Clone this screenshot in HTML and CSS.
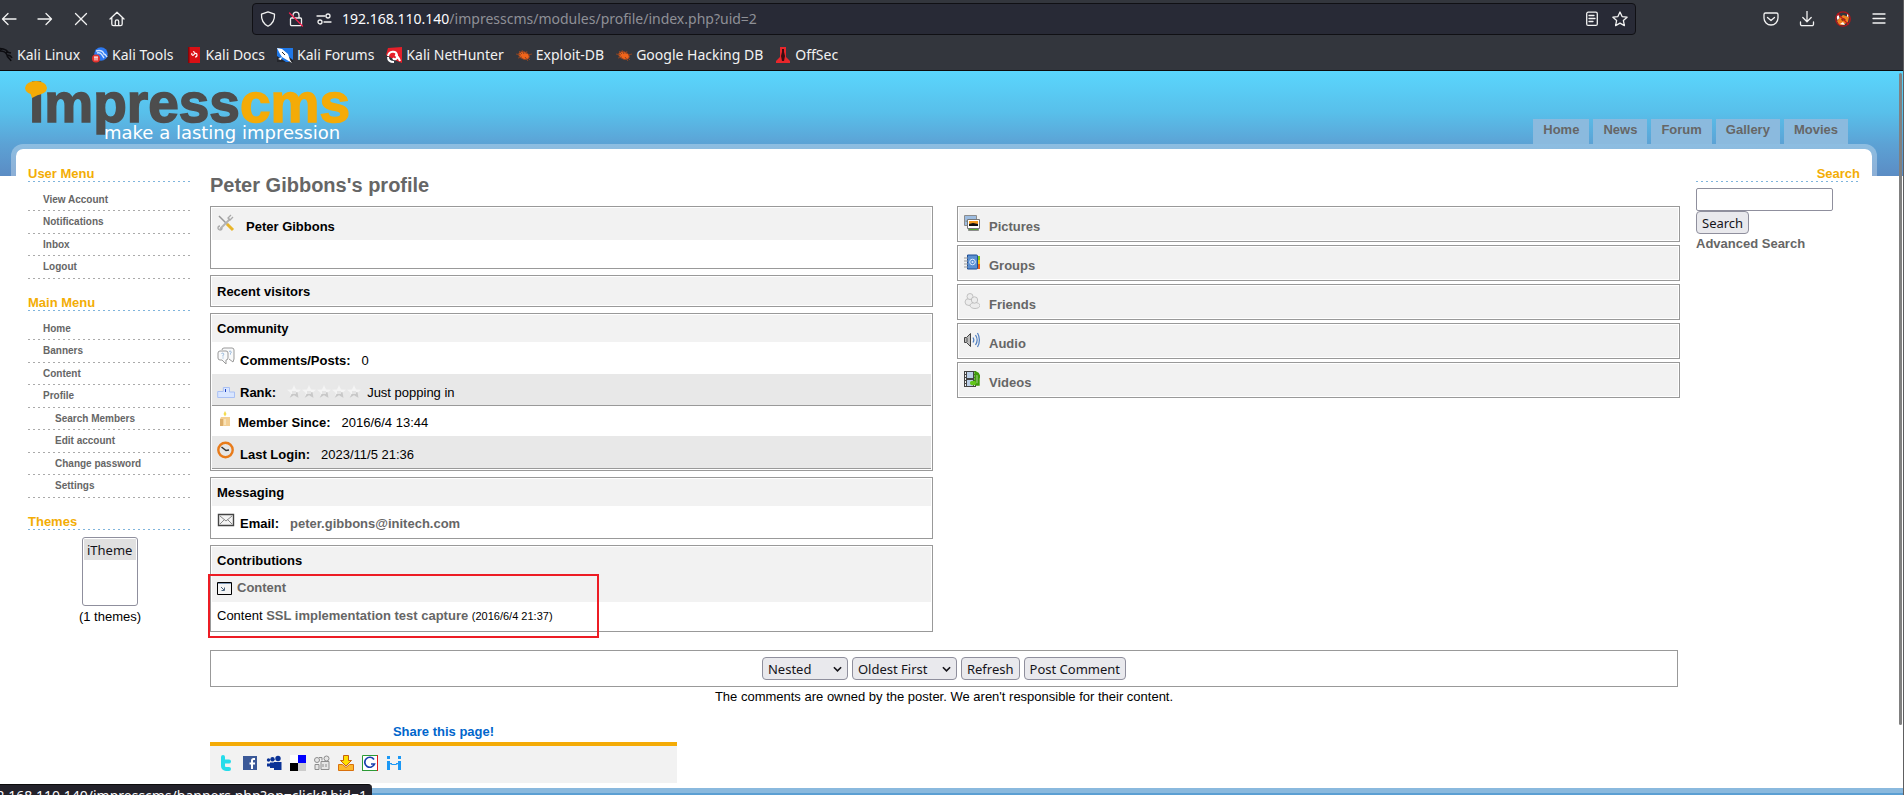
FILE: index.html
```html
<!DOCTYPE html>
<html lang="en">
<head>
<meta charset="utf-8">
<title>Peter Gibbons's profile</title>
<link rel="stylesheet" href="styles.css">
</head>
<body>
<header class="chrome">
  <div class="toolbar">
    <div class="nav-buttons">
      <button class="tool" aria-label="Back"><svg viewBox="0 0 16 16"><path d="M15 8H2M7 2.500L1.500 8l5.500 5.500"/></svg></button>
      <button class="tool" aria-label="Forward"><svg viewBox="0 0 16 16"><path d="M1 8h13M9 2.500L14.500 8 9 13.500"/></svg></button>
      <button class="tool" aria-label="Stop"><svg viewBox="0 0 16 16"><path d="M2.500 2.500l11 11M13.500 2.500l-11 11"/></svg></button>
      <button class="tool" aria-label="Home"><svg viewBox="0 0 16 16"><path d="M1 8L8 1.200 15 8M2.800 6.500V13a1.700 1.700 0 0 0 1.700 1.700h7A1.700 1.700 0 0 0 13.200 13V6.500M6.300 14.500v-4a1.700 1.700 0 0 1 3.400 0v4"/></svg></button>
    </div>
    <div class="urlbar">
      <svg class="tool-icon" viewBox="0 0 16 16"><path d="M8 .8l6.500 2.400c.3 5-1.500 9.300-6.500 12C3 12.500 1.200 8.200 1.500 3.200z"/></svg>
      <svg class="tool-icon" viewBox="0 0 16 16"><path d="M5 7V4.200a3 3 0 0 1 6 0V7M3.500 7h9a1 1 0 0 1 1 1v5.500a1.200 1.200 0 0 1-1.200 1.200H3.700a1.200 1.200 0 0 1-1.200-1.200V8a1 1 0 0 1 1-1z"/><path class="strike" d="M1.500 2l13 13"/></svg>
      <svg class="tool-icon" viewBox="0 0 16 16"><path d="M1 5h8M8 11h7"/><circle cx="12" cy="5" r="2"/><circle cx="4" cy="11" r="2"/></svg>
      <span class="url"><b>192.168.110.140</b>/impresscms/modules/profile/index.php?uid=2</span>
      <svg class="tool-icon" viewBox="0 0 16 16"><rect x="2.700" y="1.200" width="10.600" height="13.200" rx="1.500"/><path d="M5 4.500h5M5 7.500h6M5 10.500h4"/></svg>
      <svg class="tool-icon" viewBox="0 0 16 16"><path d="M8 1l2.100 4.600 5 .6-3.700 3.400 1 5L8 12.100l-4.400 2.500 1-5L.9 6.200l5-.6z"/></svg>
    </div>
    <div class="right-buttons">
      <button class="tool" aria-label="Pocket"><svg viewBox="0 0 16 16"><path d="M2.500 2h11A1.500 1.500 0 0 1 15 3.500V7a7 7 0 0 1-14 0V3.500A1.500 1.500 0 0 1 2.500 2zM4.500 6.500L8 9.500l3.500-3"/></svg></button>
      <button class="tool" aria-label="Downloads"><svg viewBox="0 0 16 16"><path d="M8 0v10.500M3.800 6.500L8 10.700l4.200-4.200M1.500 11v2.200a1.500 1.500 0 0 0 1.500 1.500h10a1.500 1.500 0 0 0 1.500-1.500V11"/></svg></button>
      <button class="tool" aria-label="FoxyProxy"><svg viewBox="0 0 16 16"><g stroke="none"><path fill="#f08020" d="M2 10c2-3 4-4 6-6l6 2-1 5-5 3H4z"/><path fill="#fff" d="M1.500 6l2-3 1 4-2 2zM12 2.500l2 2.500-2 1zM5 13l3-2 2 3z"/><path fill="#7a3b10" d="M6 8l3-1 2 2-4 1z"/></g><circle cx="8" cy="8" r="7.200" stroke="#b4161c"/><path stroke="#c4161c" d="M3 3l10 10"/></svg></button>
      <button class="tool" aria-label="Menu"><svg viewBox="0 0 16 16"><path d="M2 3h12M2 7.500h12M2 12h12"/></svg></button>
    </div>
  </div>
  <nav class="bookmarks">
    <a href="#"><svg viewBox="0 0 16 16"><path d="M0 2c4-1 9 0 11 3M3 4c3 0 6 1 7 4 2 0 4 1 5 3M10 8c0 3 3 3 4 6M5 2l-3 2M9 5l5 1" fill="none" stroke="#0c0c10" stroke-width="1.500"/></svg>Kali Linux</a>
    <a href="#"><svg viewBox="0 0 16 16"><circle cx="9" cy="7" r="6.800" fill="#2d78f0"/><path d="M4 4c4-1 7 0 8 3 1 0 2 1 3 3M5 6c3-1 4 0 5 2l2 3" fill="none" stroke="#cfe3ff" stroke-width="1.400"/><circle cx="4" cy="11.500" r="4" fill="#e5322d"/><path d="M2 10h4M3 10v3.500M5 10v3.500" stroke="#fff" fill="none"/></svg>Kali Tools</a>
    <a href="#"><svg viewBox="0 0 16 16"><path fill="#d91015" d="M2 0h12v16H2z"/><path fill="#8a0508" d="M2 0h1.500v16H2z"/><path d="M6 6c-1 2 1 3 2 1.500S11 6 11 8s-1 2-2 2M7 4.500l2 1" stroke="#fff" stroke-width="1.200" fill="none"/></svg>Kali Docs</a>
    <a href="#"><svg viewBox="0 0 16 16"><path fill="#1f78e8" d="M0 1h16v14H0z"/><path fill="#24262c" d="M0 15V9l9 6zM12 10l4 3v2h-4z"/><path fill="#fff" d="M0 1l5 1 6 5 2 6 2 3-5-3-5-3-2-3zM1 12l4-2-1 3z"/><path d="M5 5l3 3" stroke="#24262c" fill="none"/></svg>Kali Forums</a>
    <a href="#"><svg viewBox="0 0 16 16"><path fill="#e6202a" d="M2 1l14-1v16l-5-2L0 8z"/><path d="M2 9c1-5 8-6 9-1s-3 5-4 3M9 8c3 1 4 3 5 6M2 10c0 3 2 5 6 5" fill="none" stroke="#fff" stroke-width="2"/></svg>Kali NetHunter</a>
    <a href="#"><svg class="bug" viewBox="0 0 16 16"><ellipse cx="8" cy="8.500" rx="5.500" ry="3.600" transform="rotate(20 8 8.500)"/><path d="M0 7l5 1M2 11l4-1M6 3l2 4M11 4l-1 3M12 8l4-1M9 10l3 4M3 4l3 3M12 11l2 2"/></svg>Exploit-DB</a>
    <a href="#"><svg class="bug" viewBox="0 0 16 16"><ellipse cx="8" cy="8.500" rx="5.500" ry="3.600" transform="rotate(20 8 8.500)"/><path d="M0 7l5 1M2 11l4-1M6 3l2 4M11 4l-1 3M12 8l4-1M9 10l3 4M3 4l3 3M12 11l2 2"/></svg>Google Hacking DB</a>
    <a href="#"><svg viewBox="0 0 16 16"><path fill="#e8262b" d="M5 0h6v10l4 4v2H1v-2l4-4z"/><path fill="#3a0d10" d="M7 2h2v3l1 4-1 5H7l-1-5 1-4z"/></svg>OffSec</a>
  </nav>
</header>

<div class="page">
  <div class="banner">
    <svg class="logo" viewBox="0 0 330 64" role="img" aria-label="impresscms make a lasting impression">
      <text class="logo-name" x="4" y="42">impress<tspan class="logo-accent">cms</tspan></text>
      <ellipse class="logo-bubble" cx="11" cy="8" rx="11" ry="7"/>
      <path class="logo-bubble" d="M5 12l2 6 8-4z"/>
      <text class="logo-tag" x="79" y="59">make a lasting impression</text>
    </svg>
    <nav class="tabs">
      <a href="#">Home</a><a href="#">News</a><a href="#">Forum</a><a href="#">Gallery</a><a href="#">Movies</a>
    </nav>
  </div>

  <div class="frame">
    <aside class="side">
      <section>
        <h2 class="side-title">User Menu</h2>
        <ul class="menu">
          <li><a href="#">View Account</a></li>
          <li><a href="#">Notifications</a></li>
          <li><a href="#">Inbox</a></li>
          <li><a href="#">Logout</a></li>
        </ul>
      </section>
      <section>
        <h2 class="side-title">Main Menu</h2>
        <ul class="menu">
          <li><a href="#">Home</a></li>
          <li><a href="#">Banners</a></li>
          <li><a href="#">Content</a></li>
          <li><a href="#">Profile</a></li>
          <li class="sub"><a href="#">Search Members</a></li>
          <li class="sub"><a href="#">Edit account</a></li>
          <li class="sub"><a href="#">Change password</a></li>
          <li class="sub"><a href="#">Settings</a></li>
        </ul>
      </section>
      <section>
        <h2 class="side-title">Themes</h2>
        <div class="themes">
          <select class="theme-list" size="3" aria-label="Themes"><option selected>iTheme</option></select>
          <span>(1 themes)</span>
        </div>
      </section>
    </aside>

    <main class="main">
      <h1>Peter Gibbons's profile</h1>
      <div class="columns">
        <div class="column">
          <section class="box">
            <h3 class="head with-icon">
              <svg class="icon" viewBox="0 0 18 18"><path d="M2 2l9 9" stroke="#999" stroke-width="1.500"/><path d="M10 10l6 6" stroke="#e8b52a" stroke-width="3"/><path d="M3 15L13 5" stroke="#b4b4b4" stroke-width="2"/><path d="M16 3l-3 3-2-2 3-3M5 14a2 2 0 1 1-2-2" stroke="#aaa" fill="none" stroke-width="1.300"/></svg>
              Peter Gibbons</h3>
            <div class="blank"></div>
          </section>
          <section class="box"><h3 class="head lone">Recent visitors</h3></section>
          <section class="box">
            <h3 class="head">Community</h3>
            <div class="row">
              <svg class="icon" viewBox="0 0 18 18"><path d="M5 3a2 2 0 0 1 2-2h8a2 2 0 0 1 2 2v9l-1 3-4-3M1 6a2 2 0 0 1 2-2h6a2 2 0 0 1 2 2v5a2 2 0 0 1-2 2v4l-4-4H3a2 2 0 0 1-2-2z" fill="#f8f9fa" stroke="#999"/><path d="M4.500 6.500c2-1 3 .5 1.500 2v1M6 10.500v1M12 4.500c2-1 3 .5 1.500 2v1" fill="none" stroke="#8ab0d8"/></svg>
              <b>Comments/Posts:</b><span>0</span></div>
            <div class="row shade">
              <svg class="icon low" viewBox="0 0 18 18"><path d="M.7 8.500h5.600v-4h6.200V9h5v5.500H.7z" fill="#d9e6ff" stroke="#a9c0f4"/><path d="M8.500 6v3" stroke="#1b3fbf"/></svg>
              <b>Rank:</b>
              <span class="rank"><svg class="stars" viewBox="0 0 75 14"><defs><g id="star"><path fill="#f4f4f4" d="M7 0l2 4.500 5 .3-3.800 3.200 1.300 5L7 10.300 2.500 13l1.300-5L0 4.800l5-.3z"/><path fill="#c8c8c8" d="M7 8l3.500-1 1 6L7 10.300 2.500 13l2-4z"/><path fill="#e4e4e4" d="M5 6h4v3H5z"/></g></defs><use href="#star"/><use href="#star" x="15"/><use href="#star" x="30"/><use href="#star" x="45"/><use href="#star" x="60"/></svg>Just popping in</span></div>
            <div class="row compact">
              <svg class="icon slim" viewBox="0 0 16 18"><path d="M4 7h9v9H3V9z" fill="#f3cf94"/><path d="M3 9h3v7H3z" fill="#dcae6b"/><path d="M8 1l1.500 3L8 6.500 6.500 4z" fill="#f4dc4e"/><path d="M7 9h2v6H7z" fill="#f9e2b8"/></svg>
              <b>Member Since:</b><span>2016/6/4 13:44</span></div>
            <div class="row shade last">
              <svg class="icon" viewBox="0 0 18 18"><circle cx="8.500" cy="9" r="7.200" fill="#e6e6e6" stroke="#e87b1a" stroke-width="2.400"/><path d="M4.500 6L9 9.500l3-.5" fill="none" stroke="#333" stroke-width="1.500"/></svg>
              <b>Last Login:</b><span>2023/11/5 21:36</span></div>
          </section>
          <section class="box">
            <h3 class="head">Messaging</h3>
            <div class="row mail">
              <svg class="icon" viewBox="0 0 18 18"><path d="M1.500 3.500h15v11h-15z" fill="#f4f4f4" stroke="#444" stroke-width="1.400"/><path d="M3 5l6 5 6-5M3 13l4.500-4.500M15 13l-4.500-4.500" fill="none" stroke="#888"/></svg>
              <b>Email:</b><a class="link" href="#">peter.gibbons@initech.com</a></div>
          </section>
          <section class="box">
            <h3 class="head">Contributions</h3>
            <div class="marked">
              <h4 class="sub-head"><svg class="window" viewBox="0 0 15 13"><path d="M.5.5h14v12H.5z" fill="#f4f4f4" stroke="#000"/><path d="M1 1.500h13" stroke="#7d97b5"/><path d="M4 5l3 3M7.500 5.500v3H4.500" stroke="#48627c" fill="none"/></svg><a class="link" href="#">Content</a></h4>
              <p class="entry">Content <a class="link" href="#">SSL implementation test capture</a> <small>(2016/6/4 21:37)</small></p>
            </div>
          </section>
        </div>

        <div class="column tight">
          <section class="box tile"><h3 class="head with-icon"><svg class="icon small" viewBox="0 0 16 16"><path d="M.5.5h12v10H.5z" fill="#9dbce0" stroke="#8c8c8c"/><path d="M1.500 6h3v9.500h10V12" fill="#55a832" stroke="#8c8c8c"/><path d="M3.500 4.500h12v9h-12z" fill="#fff" stroke="#777"/><path d="M5 6h9v5H5z" fill="#f49a1e"/><path d="M5 9l4-1 5 1v2H5z" fill="#111"/></svg><a class="link" href="#">Pictures</a></h3></section>
          <section class="box tile"><h3 class="head with-icon"><svg class="icon small" viewBox="0 0 16 16"><path fill="#7cc520" d="M13 2h3v4h-3z"/><path fill="#f2c61b" d="M13 6h3v4h-3z"/><path fill="#e9601b" d="M13 10h3v5h-3z"/><path d="M3.500 1h9a1 1 0 0 1 1 1v12a1 1 0 0 1-1 1h-9z" fill="#5b90d2" stroke="#1d4d94"/><circle cx="8.500" cy="8" r="2.800" fill="none" stroke="#dceaff"/><circle cx="8.500" cy="8" r="1" fill="#dceaff"/><path d="M0 4h4M0 7h4M0 10h4M0 13h4" stroke="#999"/></svg><a class="link" href="#">Groups</a></h3></section>
          <section class="box tile"><h3 class="head with-icon"><svg class="icon small" viewBox="0 0 16 16"><g fill="#ececec" stroke="#b5b5b5" stroke-width=".8"><ellipse cx="5" cy="9" rx="4" ry="3.500"/><circle cx="6" cy="3.500" r="3"/><ellipse cx="11" cy="12.500" rx="5" ry="3"/><circle cx="10.500" cy="7" r="3.200"/></g></svg><a class="link" href="#">Friends</a></h3></section>
          <section class="box tile"><h3 class="head with-icon"><svg class="icon small" viewBox="0 0 16 16"><path d="M.5 5.500h2l4-4v13l-4-4h-2z" fill="#bbb" stroke="#444"/><path d="M3 6v4" stroke="#555"/><path d="M9 5.500c1 1.500 1 3.500 0 5M11.500 3c2 3 2 7 0 10M13.500 1c2.500 4 2.500 10 0 14" fill="none" stroke="#4e7ec0" stroke-width="1.200"/></svg><a class="link" href="#">Audio</a></h3></section>
          <section class="box tile"><h3 class="head with-icon"><svg class="icon small" viewBox="0 0 16 16"><path fill="#444" d="M0 0h12v16H0z"/><path fill="#bcd0e8" d="M3 1h6v6H3zM3 9h6v6H3z"/><path d="M1.500 1v15M10.500 1v15" stroke="#eee" stroke-dasharray="2 1"/><path d="M8 12.500h3.500v-11c3 1 4 3 3 6M14.500 5v8.500h-3" fill="none" stroke="#3f9c0a" stroke-width="2.400"/><ellipse cx="9" cy="12" rx="3" ry="2.300" fill="#63c71c"/></svg><a class="link" href="#">Videos</a></h3></section>
        </div>
      </div>

      <form class="comment-bar">
        <span class="drop nested"><select aria-label="View mode"><option>Nested</option></select><svg viewBox="0 0 10 6"><path d="M1 1l4 4 4-4"/></svg></span>
        <span class="drop order"><select aria-label="Order"><option>Oldest First</option></select><svg viewBox="0 0 10 6"><path d="M1 1l4 4 4-4"/></svg></span>
        <button class="btn" type="button">Refresh</button>
        <button class="btn" type="button">Post Comment</button>
      </form>
      <p class="notice">The comments are owned by the poster. We aren't responsible for their content.</p>

      <section class="share">
        <h3>Share this page!</h3>
        <div class="share-icons">
          <a href="#" aria-label="Twitter"><svg viewBox="0 0 16 16"><path d="M5 2v9a3 3 0 0 0 3 3h3M5 6.500h6" fill="none" stroke="#25dcea" stroke-width="4" stroke-linecap="round"/></svg></a>
          <a href="#" aria-label="Facebook"><svg viewBox="0 0 16 16"><path fill="#3b5998" d="M1 1h14v14H1z"/><path d="M13 4h-1.500a1.500 1.500 0 0 0-1.500 1.500V14M7.500 8.500H13" stroke="#fff" stroke-width="2" fill="none"/></svg></a>
          <a href="#" aria-label="Myspace"><svg viewBox="0 0 16 16" fill="#0a3296"><circle cx="12" cy="3.500" r="2.700"/><circle cx="6.500" cy="4.200" r="2.200"/><circle cx="2.500" cy="5" r="1.700"/><path d="M1 8.500h3.500v3H1zM4 7.500h5V13H4zM8 7h7.500v8H8z"/></svg></a>
          <a href="#" aria-label="Delicious"><svg viewBox="0 0 16 16"><path fill="#fff" d="M0 0h8v8H0z"/><path fill="#00f" d="M8 0h8v8H8z"/><path fill="#000" d="M0 8h8v8H0z"/><path fill="#ccc" d="M8 8h8v8H8z"/></svg></a>
          <a href="#" aria-label="Digg"><svg viewBox="0 0 16 16"><g fill="#e6e6e6" stroke="#8e8e8e"><circle cx="3" cy="5" r="2.500"/><path d="M1 9.500h4v5H1zM7 6.500h8v8H7z"/><circle cx="12.500" cy="3.500" r="2.500"/><path d="M5 2.500h3v3M9 9v3M12 9v3"/></g></svg></a>
          <a href="#" aria-label="Save"><svg viewBox="0 0 16 16"><path d="M.5 9.500h4l3.500 3 3.500-3h4v6H.5z" fill="#fbb72c" stroke="#d9700c"/><path d="M5.500.5h5v5h3L8 11 2.500 5.500h3z" fill="#ffdf00" stroke="#c7600c"/></svg></a>
          <a href="#" aria-label="Google"><svg viewBox="0 0 16 16"><path fill="#fff" d="M0 0h16v16H0z"/><path d="M.5 16V.5H16" fill="none" stroke="#2c9a36"/><path d="M0 15.500h16" stroke="#2c9a36"/><path d="M15.500 0v16" stroke="#e11b1b"/><path d="M12 4.500a5 5 0 1 0 .5 4.500H9" fill="none" stroke="#1b3fae" stroke-width="1.700"/></svg></a>
          <a href="#" aria-label="Identi"><svg viewBox="0 0 16 16" fill="#1b98f5"><path d="M1 1h3v3H1zM1 6h3v9H1zM12 1h3v3h-3zM12 6h3v9h-3zM4 8h2v1h4V8h2v1l-2 1H6L4 9z"/></svg></a>
        </div>
      </section>
    </main>

    <aside class="side search">
      <h2 class="side-title">Search</h2>
      <input type="text" class="field" aria-label="Search terms">
      <button class="btn" type="button">Search</button>
      <a class="link" href="#">Advanced Search</a>
    </aside>
  </div>
  <footer class="foot"></footer>
</div>
<div class="status"><span>192.168.110.140/impresscms/banners.php?op=click&amp;bid=1</span></div>
<div class="scroll-thumb"></div>
</body>
</html>
```
FILE: styles.css
```css
* { box-sizing: border-box; }
body {
  margin: 0;
  height: 100vh;
  display: flex;
  flex-direction: column;
  overflow: hidden;
  position: relative;
  border-right: 1px solid #5e5e60;
  font: 13px/16px "Liberation Sans", Arial, sans-serif;
  color: #000;
  background: #fff;
}
h1, h2, h3, h4, p, ul { margin: 0; padding: 0; }
a { color: inherit; text-decoration: none; }
button, select, input { font: 13px/18px "Noto Sans", sans-serif; color: #15141a; margin: 0; }

.chrome {
  flex: none;
  background: #33363d;
  border-bottom: 1px solid #0c0c0d;
  color: #f2f2f2;
  font: 14px/20px "Noto Sans", sans-serif;
}
.toolbar { display: flex; align-items: center; padding-top: 3px; }
.nav-buttons { display: flex; gap: 20px; width: 252px; flex: none; padding-left: 1px; }
.right-buttons { display: flex; justify-content: flex-end; gap: 20px; width: 267px; flex: none; padding-right: 16px; }
.tool { width: 16px; height: 16px; padding: 0; border: 0; background: none; }
.tool svg, .tool-icon {
  display: block; flex: none; width: 16px; height: 16px;
  fill: none; stroke: #f2f2f2; stroke-width: 1.3; stroke-linecap: round; stroke-linejoin: round;
}
.tool-icon .strike { stroke: #f0204e; }
.urlbar {
  flex: 1; display: flex; align-items: center; gap: 12px;
  height: 32px; padding: 0 7px;
  background: #282a36; border: 1px solid #101014; border-radius: 4px;
}
.url { flex: 1; color: #8f9096; margin-left: -2px; }
.url b { font-weight: 400; color: #fbfbfe; }
.bookmarks { display: flex; gap: 12px; height: 35px; margin-left: -3px; padding-top: 4px; align-items: center; }
.bookmarks a { display: flex; align-items: center; gap: 4px; white-space: nowrap; }
.bookmarks svg { width: 16px; height: 16px; }
.bug { fill: #f0641a; stroke: #8d4424; stroke-width: 1; }

.page {
  flex: 1; min-height: 0;
  display: flex; flex-direction: column;
  background: linear-gradient(#5ad6fd, #58bfea 42px, #5ca2d5 73px, #5b8cc4 105px) no-repeat 0 0 / 100% 105px;
}
.banner { flex: none; display: flex; justify-content: space-between; align-items: flex-end; padding: 9px 55px 0 25px; }
.logo { width: 330px; height: 64px; overflow: visible; display: block; }
.logo-name { font: bold 55px "Liberation Sans", Arial, sans-serif; fill: #4d4d4d; stroke: #4d4d4d; stroke-width: 1.5; }
.logo-accent, .logo-bubble { fill: #f4ab07; }
.logo-accent { stroke: #f4ab07; }
.logo-tag { font: 18px "DejaVu Sans", sans-serif; fill: #fff; }
.tabs { display: flex; gap: 4px; }
.tabs a { height: 25px; padding: 3px 10px 0; background: #8bbade; color: #666; font-weight: bold; }

.frame {
  flex: 1; min-height: 0;
  margin: 0 26px 0 11px; padding: 17px 12px 0;
  display: grid; grid-template-columns: 164px 1fr 164px; gap: 16px;
  border: 5px solid rgba(255, 255, 255, .3); border-bottom: 0;
  border-radius: 12px 12px 0 0;
  background: #fff; background-clip: padding-box;
}
.side-title, .menu li {
  background: repeating-linear-gradient(90deg, var(--dash) 0 2px, transparent 2px 5px) no-repeat 0 100% / 100% 1px;
}
.side-title { --dash: #7fb4dc; font-size: 13px; line-height: 15px; color: #f3ad05; padding-bottom: 1px; }
.menu { list-style: none; padding-top: 7px; }
.menu li { --dash: #aaa; height: 22px; padding: 5px 0 0 15px; font: bold 10px/12px "Liberation Sans", Arial, sans-serif; color: #666; }
.menu li:nth-child(even) { height: 23px; }
.menu .sub { padding-left: 27px; }
.side section + section { margin-top: 16px; }
.themes { display: flex; flex-direction: column; align-items: center; padding-top: 7px; gap: 3px; }
.theme-list { width: 56px; height: 69px; padding: 1px; border: 1px solid #8f8f9d; border-radius: 3px; background: #fff; overflow: hidden; }
.theme-list option { padding: 2px 3px 1px; min-height: 21px; }
.theme-list option:checked { background: #e0e0e0 linear-gradient(#e0e0e0, #e0e0e0); color: #15141a; }

.main { min-width: 0; padding: 8px 0 0 2px; }
h1 { font-size: 20px; line-height: 23px; color: #666; padding-bottom: 9px; }
.columns { display: grid; grid-template-columns: 1fr 1fr; gap: 24px; align-items: start; }
.column { display: flex; flex-direction: column; gap: 6px; }
.column.tight { gap: 3px; }
.box { border: 1px solid #999; padding: 1px; }
.head { font-size: 13px; line-height: 16px; background: #f2f2f2; padding: 6px 5px 5px; }
.head.lone { padding: 7px 5px 5px; }
.with-icon { display: flex; align-items: flex-end; gap: 11px; }
.icon { width: 18px; height: 18px; flex: none; align-self: flex-start; display: block; }
.with-icon .icon { margin-bottom: 3px; }
.icon.small { width: 16px; height: 16px; }
.icon.slim { width: 16px; }
.icon.low { align-self: flex-end; }
.blank { height: 27px; }
.row { display: flex; align-items: flex-end; gap: 5px; padding: 5px; height: 32px; }
.row b + * { margin-left: 6px; }
.row.shade { background: #e8e8e8; border-bottom: 1px solid #999; padding-bottom: 4px; }
.row.compact { height: 30px; padding-top: 4px; }
.row.last { height: 33px; padding-bottom: 5px; }
.row.mail { height: 31px; }
.rank { display: flex; gap: 5px; }
.stars { width: 75px; height: 14px; }
.link { color: #666; font-weight: bold; }
.marked { position: relative; }
.marked::after { content: ""; position: absolute; left: -4px; top: 0; width: 387px; bottom: -8px; border: 2px solid #ed1c24; }
.sub-head { display: flex; align-items: center; gap: 5px; font-size: 13px; line-height: 16px; background: #f2f2f2; padding: 6px 5px; }
.window { width: 15px; height: 13px; }
.entry { padding: 6px 5px; }
small { font-size: 11px; }
.tile .with-icon { gap: 9px; padding: 7px 5px 5px; min-height: 32px; }

.comment-bar { display: flex; justify-content: center; gap: 4px; margin: 18px 2px 0 0; padding: 6px; border: 1px solid #999; }
.btn { height: 23px; padding: 0 5px; background: #e9e9ed; border: 1px solid #8f8f9d; border-radius: 4px; }
.drop { position: relative; display: block; }
.drop select { appearance: none; width: 100%; height: 23px; padding: 0 5px; background: #e9e9ed; border: 1px solid #8f8f9d; border-radius: 4px; }
.drop svg { position: absolute; right: 6px; top: 9px; width: 9px; height: 6px; fill: none; stroke: #15141a; stroke-width: 1.8; pointer-events: none; }
.nested { width: 86px; }
.order { width: 105px; }
.notice { text-align: center; margin: 2px 2px 0 0; }

.share { width: 467px; margin-top: 19px; text-align: center; }
.share h3 { font-size: 13px; line-height: 16px; color: #0066cc; padding-bottom: 2px; }
.share-icons { display: flex; gap: 8px; height: 41px; padding: 9px 8px 0; background: #f2f2f2; border-top: 4px solid #f4ab07; }
.share-icons svg { display: block; width: 16px; height: 16px; }

.search { display: flex; flex-direction: column; align-items: flex-start; }
.search .side-title { width: 100%; text-align: right; }
.field { width: 137px; height: 23px; margin-top: 6px; border: 1px solid #8f8f9d; border-radius: 2px; background: #fff; }
.search .link { padding-top: 2px; }

.foot { flex: none; height: 7px; background: #5b9fd3; border-top: 5px solid #8ab9de; }
.status {
  position: absolute; left: 0; bottom: 0; width: 372px; height: 11px; overflow: hidden;
  display: flex; justify-content: flex-end; padding: 1px 5px 0 0;
  background: #23222b; border-top: 1px solid #0c0c0d; border-radius: 0 4px 0 0;
  color: #fbfbfe; font: 14px/20px "Noto Sans", sans-serif; white-space: nowrap;
}
.scroll-thumb { position: absolute; right: 1px; top: 73px; width: 3px; height: 652px; border-radius: 2px; background: #808080; }
```
